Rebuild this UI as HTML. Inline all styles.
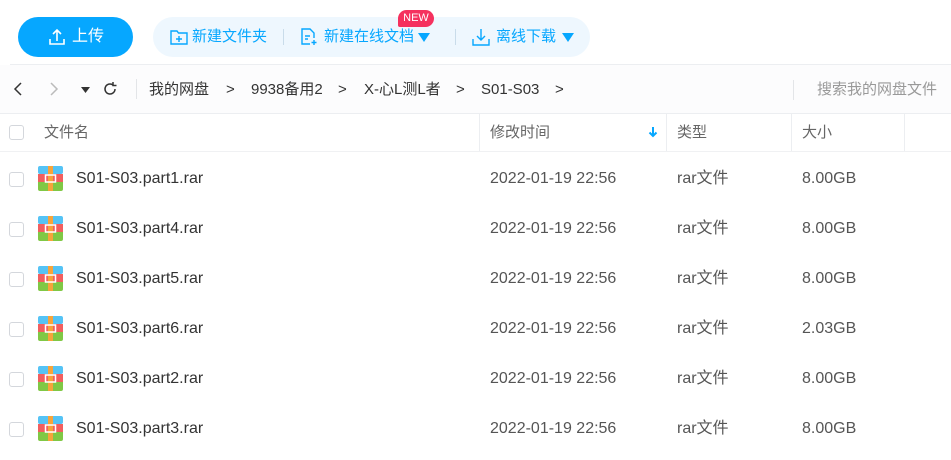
<!DOCTYPE html>
<html><head><meta charset="utf-8"><style>
*{margin:0;padding:0;box-sizing:border-box}
body{width:951px;height:460px;background:#fff;font-family:"Liberation Sans","Noto Sans CJK SC",sans-serif;position:relative;overflow:hidden;color:#454d5a}
.a{position:absolute;white-space:nowrap}
.t{height:22px;line-height:22px}
.up{left:18px;top:17px;width:115px;height:40px;border-radius:20px;background:#06a7ff;color:#fff;font-size:16px}
.pill{left:153px;top:17px;width:437px;height:40px;border-radius:20px;background:#eef7fe}
.tb{color:#06a7ff;font-size:15px;top:26px}
.bc{top:79px;font-size:15px;color:#333}
.hd{top:122px;font-size:15px;color:#666}
.cb{left:9px;width:15px;height:15px;border:1px solid #d4d7dc;border-radius:3px;background:#fff}
.row{font-size:16px;color:#333}
</style></head><body>
<div class="a up"><svg class="a" style="left:30px;top:11px" width="18" height="18" viewBox="0 0 18 18" fill="none" stroke="#fff" stroke-width="1.6"><path d="M9 13V2M5 6l4-4 4 4M2 11v5h14v-5"/></svg><span class="a t" style="left:54px;top:9px">上传</span></div>
<div class="a pill"></div>
<svg class="a" style="left:170px;top:29px" width="18" height="16" viewBox="0 0 18 16" fill="none" stroke="#06a7ff" stroke-width="1.4"><path d="M1 2h6l1.5 2H17v11H1z"/><path d="M9 7v6M6 10h6"/></svg>
<span class="a t tb" style="left:192px">新建文件夹</span>
<div class="a" style="left:283px;top:29px;width:1px;height:16px;background:#c9dcea"></div>
<svg class="a" style="left:300px;top:28px" width="18" height="18" viewBox="0 0 18 18" fill="none" stroke="#06a7ff" stroke-width="1.4"><path d="M10 16H2V1h8l4 4v5"/><path d="M5 8h5M5 11h3M14 12v5M11.5 14.5h5"/></svg>
<span class="a t tb" style="left:324px">新建在线文档</span>
<svg class="a" style="left:418px;top:33px" width="12" height="9" viewBox="0 0 12 9"><path d="M0 0h12L6 9z" fill="#06a7ff"/></svg>
<div class="a" style="left:398px;top:10px;width:36px;height:17px;border-radius:9px 9px 9px 2px;background:#f5315e;color:#fff;font-size:11px;text-align:center;line-height:17px">NEW</div>
<div class="a" style="left:455px;top:29px;width:1px;height:16px;background:#c9dcea"></div>
<svg class="a" style="left:472px;top:28px" width="18" height="18" viewBox="0 0 18 18" fill="none" stroke="#06a7ff" stroke-width="1.4"><path d="M9 1v11M5 8l4 4 4-4M1 11v6h16v-6"/></svg>
<span class="a t tb" style="left:496px">离线下载</span>
<svg class="a" style="left:562px;top:33px" width="12" height="9" viewBox="0 0 12 9"><path d="M0 0h12L6 9z" fill="#06a7ff"/></svg>
<div class="a" style="left:10px;top:64px;width:941px;height:1px;background:#eceef1"></div>
<div class="a" style="left:0;top:65px;width:951px;height:48px;background:#fcfcfd"></div>
<svg class="a" style="left:12px;top:81px" width="12" height="16" viewBox="0 0 12 16" fill="none" stroke="#333" stroke-width="1.5"><path d="M9 2L3 8l6 6"/></svg>
<svg class="a" style="left:48px;top:81px" width="12" height="16" viewBox="0 0 12 16" fill="none" stroke="#bbb" stroke-width="1.5"><path d="M3 2l6 6-6 6"/></svg>
<svg class="a" style="left:81px;top:87px" width="9" height="6" viewBox="0 0 9 6"><path d="M0 0h9L4.5 6z" fill="#333"/></svg>
<svg class="a" style="left:102px;top:81px" width="16" height="16" viewBox="0 0 16 16" fill="none" stroke="#333" stroke-width="1.5"><path d="M13 8a5 5 0 1 1-2-4M11 1v3.5h3.5"/></svg>
<div class="a" style="left:136px;top:79px;width:1px;height:20px;background:#e3e5e8"></div>
<span class="a t bc" style="left:149px">我的网盘</span><span class="a t bc" style="left:226px">&gt;</span>
<span class="a t bc" style="left:251px">9938备用2</span><span class="a t bc" style="left:338px">&gt;</span>
<span class="a t bc" style="left:364px">X-心L测L者</span><span class="a t bc" style="left:456px">&gt;</span>
<span class="a t bc" style="left:481px">S01-S03</span><span class="a t bc" style="left:555px">&gt;</span>
<div class="a" style="left:793px;top:80px;width:1px;height:20px;background:#e3e5e8"></div>
<span class="a t" style="left:817px;top:79px;font-size:15px;color:#999">搜索我的网盘文件</span>
<div class="a" style="left:0;top:113px;width:951px;height:1px;background:#eceef1"></div>
<div class="a" style="left:0;top:151px;width:951px;height:1px;background:#f0f1f3"></div>
<div class="a" style="left:479px;top:114px;width:1px;height:37px;background:#eceef1"></div>
<div class="a" style="left:666px;top:114px;width:1px;height:37px;background:#eceef1"></div>
<div class="a" style="left:791px;top:114px;width:1px;height:37px;background:#eceef1"></div>
<div class="a" style="left:904px;top:114px;width:1px;height:37px;background:#eceef1"></div>
<div class="a cb" style="top:125px"></div>
<span class="a t hd" style="left:44px">文件名</span>
<span class="a t hd" style="left:490px">修改时间</span>
<svg class="a" style="left:648px;top:126px" width="10" height="12" viewBox="0 0 10 12"><path d="M5 1v9M1.5 6.5L5 10l3.5-3.5" stroke="#06a7ff" stroke-width="2" fill="none"/></svg>
<span class="a t hd" style="left:677px">类型</span>
<span class="a t hd" style="left:802px">大小</span>

<div id="rows"></div>
<script>
var d=[["part1","8.00GB"],["part4","8.00GB"],["part5","8.00GB"],["part6","2.03GB"],["part2","8.00GB"],["part3","8.00GB"]],h="";
d.forEach(function(r,i){var c=179+i*50;
h+='<div class="a cb" style="top:'+(c-7)+'px"></div>'+
'<svg class="a" style="left:38px;top:'+(c-13)+'px" width="25" height="25" viewBox="0 0 25 25"><rect x="0" y="0" width="25" height="8" rx="2" fill="#55c3f5"/><rect x="0" y="8" width="25" height="9" fill="#f25f5f"/><rect x="0" y="17" width="25" height="8" rx="2" fill="#80c845"/><rect x="0" y="16" width="25" height="3" fill="#80c845"/><rect x="10" y="0" width="5" height="25" fill="#f7a43b"/><rect x="7.5" y="9" width="10" height="7" fill="none" stroke="#fff" stroke-width="1.5"/></svg>'+
'<span class="a t row" style="left:76px;top:'+(c-11)+'px">S01-S03.'+r[0]+'.rar</span>'+
'<span class="a t row" style="left:490px;top:'+(c-11)+'px;color:#555">2022-01-19 22:56</span>'+
'<span class="a t row" style="left:677px;top:'+(c-11)+'px;color:#555">rar文件</span>'+
'<span class="a t row" style="left:802px;top:'+(c-11)+'px;color:#555">'+r[1]+'</span>';});
document.getElementById("rows").innerHTML=h;
</script>
</body></html>
